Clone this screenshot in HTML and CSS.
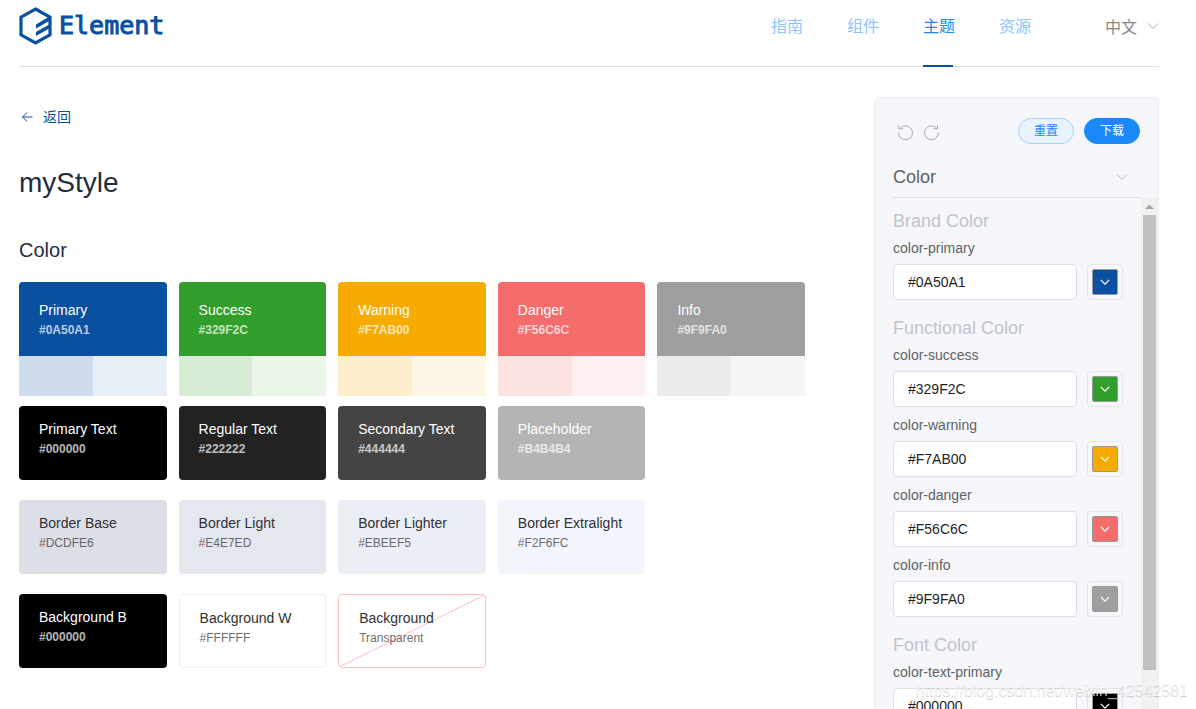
FILE: index.html
```html
<!DOCTYPE html>
<html lang="zh-CN">
<head>
<meta charset="utf-8">
<title>Element</title>
<link rel="stylesheet" href="styles.css">
</head>
<body>
<svg class="defs" aria-hidden="true">
  <symbol id="chevron" viewBox="0 0 12 12"><path d="M1 3.5 L6 8.5 L11 3.5"/></symbol>
</svg>
<div class="page">
  <header class="header">
    <a class="logo" href="#">
      <svg class="logo-mark" viewBox="0 0 34 40" aria-hidden="true">
        <path d="M16.5 3L31 11.2V28.8L16.5 37L2 28.8V11.2Z" fill="none" stroke="#0a50a1" stroke-width="3.2"/>
        <path d="M17 18.5L31 10V14.5L17 22.5ZM17 26L32 17.5V21.5L17 30Z" fill="#0a50a1"/>
      </svg>
      <span class="logo-text">Element</span>
    </a>
    <nav class="nav">
      <a class="nav-link" href="#">指南</a>
      <a class="nav-link" href="#">组件</a>
      <a class="nav-link active" href="#">主题</a>
      <a class="nav-link" href="#">资源</a>
    </nav>
    <button class="lang" type="button">中文<svg class="icon"><use href="#chevron"/></svg></button>
  </header>

  <div class="body">
    <main class="main">
      <a class="back" href="#"><svg viewBox="0 0 12 12" aria-hidden="true"><path d="M11.5 6H1.5M6 1.5L1.5 6L6 10.5"/></svg>返回</a>
      <h1 class="title">myStyle</h1>
      <h2 class="subtitle">Color</h2>

      <div class="grid brand">
        <div class="card tall primary"><div class="card-body"><span>Primary</span><small>#0A50A1</small></div><div class="tints"><i></i><i></i></div></div>
        <div class="card tall success"><div class="card-body"><span>Success</span><small>#329F2C</small></div><div class="tints"><i></i><i></i></div></div>
        <div class="card tall warning"><div class="card-body"><span>Warning</span><small>#F7AB00</small></div><div class="tints"><i></i><i></i></div></div>
        <div class="card tall danger"><div class="card-body"><span>Danger</span><small>#F56C6C</small></div><div class="tints"><i></i><i></i></div></div>
        <div class="card tall info"><div class="card-body"><span>Info</span><small>#9F9FA0</small></div><div class="tints"><i></i><i></i></div></div>
      </div>
      <div class="grid">
        <div class="card text-primary"><div class="card-body"><span>Primary Text</span><small>#000000</small></div></div>
        <div class="card text-regular"><div class="card-body"><span>Regular Text</span><small>#222222</small></div></div>
        <div class="card text-secondary"><div class="card-body"><span>Secondary Text</span><small>#444444</small></div></div>
        <div class="card text-placeholder"><div class="card-body"><span>Placeholder</span><small>#B4B4B4</small></div></div>
      </div>
      <div class="grid">
        <div class="card light border-base"><div class="card-body"><span>Border Base</span><small>#DCDFE6</small></div></div>
        <div class="card light border-light"><div class="card-body"><span>Border Light</span><small>#E4E7ED</small></div></div>
        <div class="card light border-lighter"><div class="card-body"><span>Border Lighter</span><small>#EBEEF5</small></div></div>
        <div class="card light border-extralight"><div class="card-body"><span>Border Extralight</span><small>#F2F6FC</small></div></div>
      </div>
      <div class="grid">
        <div class="card text-primary"><div class="card-body"><span>Background B</span><small>#000000</small></div></div>
        <div class="card light bg-white"><div class="card-body"><span>Background W</span><small>#FFFFFF</small></div></div>
        <div class="card light bg-transparent"><svg class="diagonal" viewBox="0 0 100 100" preserveAspectRatio="none" aria-hidden="true"><path d="M0 100L100 0"/></svg><div class="card-body"><span>Background</span><small>Transparent</small></div></div>
      </div>
    </main>

    <aside class="panel">
      <div class="toolbar">
        <button class="tool" type="button" aria-label="Undo"><svg viewBox="0 0 16 16"><path d="M1.5 8.5A7 7 0 1 0 3.2 4.2M1.8 1.5V4.7H6"/></svg></button>
        <button class="tool" type="button" aria-label="Redo"><svg viewBox="0 0 16 16"><path d="M15.5 8.5A7 7 0 1 1 13.8 4.2M14.5 1.5V4.7H10.5"/></svg></button>
        <button class="btn reset" type="button">重置</button>
        <button class="btn download" type="button">下载</button>
      </div>
      <div class="category">
        <select aria-label="Category"><option>Color</option></select>
        <svg class="icon"><use href="#chevron"/></svg>
      </div>
      <div class="scroll">
        <form class="fields">
          <section class="group">
            <h3>Brand Color</h3>
            <div class="field"><label for="c1">color-primary</label><div class="row"><input id="c1" type="text" value="#0A50A1"><button class="picker" type="button" aria-label="Pick color-primary"><span class="chip primary"><svg class="icon"><use href="#chevron"/></svg></span></button></div></div>
          </section>
          <section class="group">
            <h3>Functional Color</h3>
            <div class="field"><label for="c2">color-success</label><div class="row"><input id="c2" type="text" value="#329F2C"><button class="picker" type="button" aria-label="Pick color-success"><span class="chip success"><svg class="icon"><use href="#chevron"/></svg></span></button></div></div>
            <div class="field"><label for="c3">color-warning</label><div class="row"><input id="c3" type="text" value="#F7AB00"><button class="picker" type="button" aria-label="Pick color-warning"><span class="chip warning"><svg class="icon"><use href="#chevron"/></svg></span></button></div></div>
            <div class="field"><label for="c4">color-danger</label><div class="row"><input id="c4" type="text" value="#F56C6C"><button class="picker" type="button" aria-label="Pick color-danger"><span class="chip danger"><svg class="icon"><use href="#chevron"/></svg></span></button></div></div>
            <div class="field"><label for="c5">color-info</label><div class="row"><input id="c5" type="text" value="#9F9FA0"><button class="picker" type="button" aria-label="Pick color-info"><span class="chip info"><svg class="icon"><use href="#chevron"/></svg></span></button></div></div>
          </section>
          <section class="group">
            <h3>Font Color</h3>
            <div class="field"><label for="c6">color-text-primary</label><div class="row"><input id="c6" type="text" value="#000000"><button class="picker" type="button" aria-label="Pick color-text-primary"><span class="chip text-primary"><svg class="icon"><use href="#chevron"/></svg></span></button></div></div>
          </section>
        </form>
        <div class="scrollbar" aria-hidden="true"><svg viewBox="0 0 17 17"><path d="M4 11H13L8.5 6.5Z"/></svg><div class="thumb"></div></div>
      </div>
    </aside>
  </div>
</div>
<div class="watermark">https://blog.csdn.net/weixin_42542581</div>
</body>
</html>
```

FILE: styles.css
```css
* { box-sizing: border-box; }
body {
  margin: 0;
  font-family: "Liberation Sans", "Noto Sans CJK SC", sans-serif;
  font-size: 14px;
  color: #1f2d3d;
  background: #fff;
}
h1, h2, h3 { margin: 0; font-weight: 400; }
a { text-decoration: none; }
button, input, select { font: inherit; }
button { padding: 0; border: 0; background: none; cursor: pointer; }
.defs { position: absolute; width: 0; height: 0; }
.icon { width: 12px; height: 12px; fill: none; stroke: currentColor; }

.page {
  display: flex;
  flex-direction: column;
  height: 100vh;
  padding: 0 37px 0 19px;
  overflow: hidden;
}
.header {
  display: flex;
  flex: none;
  align-items: stretch;
  height: 67px;
  border-bottom: 1px solid #dcdfe6;
}
.logo { display: flex; gap: 6px; align-items: flex-start; padding-top: 6px; color: #0a50a1; margin-right: auto; }
.logo-mark { width: 34px; height: 40px; }
.logo-text { font: 400 25px/40px "DejaVu Sans Mono", monospace; -webkit-text-stroke: 1px currentColor; }
.nav { display: flex; gap: 44px; }
.nav-link { position: relative; font-size: 16px; line-height: 54px; color: #8cc5ff; }
.nav-link.active { color: #1989fa; }
.nav-link.active::after {
  content: "";
  position: absolute;
  right: 2px;
  bottom: -1px;
  width: 30px;
  height: 2px;
  background: #0a50a1;
}
.lang { display: flex; align-items: center; gap: 10px; height: 52px; margin-left: 74px; font-size: 16px; color: #888; }
.lang .icon { color: #aaa; }

.body { display: flex; flex: 1; gap: 69px; min-height: 0; padding-top: 30px; }
.main { flex: 1; min-width: 0; padding-top: 8px; }
.back { display: flex; align-items: center; gap: 10px; padding-left: 2px; line-height: 24px; color: #0a50a1; }
.back svg { width: 12px; height: 12px; fill: none; stroke: currentColor; }
.title { margin-top: 36px; font-size: 28px; line-height: 36px; }
.subtitle { margin-top: 35px; font-size: 20px; line-height: 28px; }

.grid { display: grid; grid-template-columns: repeat(5, 1fr); gap: 12px; margin-bottom: 20px; }
.grid.brand { margin-top: 18px; margin-bottom: 10px; }
.card { position: relative; height: 74px; border-radius: 4px; overflow: hidden; color: #fff; }
.card-body { position: relative; display: flex; flex-direction: column; height: 74px; padding: 13px 20px; }
.tall { height: 114px; }
.tall .card-body { padding-top: 18px; }
.card span { font-size: 14px; line-height: 20px; }
.card small { font-size: 12px; font-weight: 700; line-height: 20px; opacity: .7; }
.card.light small { font-weight: 400; }
.tints { display: flex; height: 40px; background: #fff; }
.tints i { flex: 1; background: var(--tint); }
.tints i + i { background: var(--tint-soft); }
.primary { background: #0a50a1; --tint: #cedcec; --tint-soft: #e7eef6; }
.success { background: #329f2c; --tint: #d6ecd5; --tint-soft: #ebf5ea; }
.warning { background: #f7ab00; --tint: #fdeecc; --tint-soft: #fef7e6; }
.danger { background: #f56c6c; --tint: #fde2e2; --tint-soft: #fef0f0; }
.info { background: #9f9fa0; --tint: #ececec; --tint-soft: #f5f5f5; }
.text-primary { background: #000; }
.text-regular { background: #222; }
.text-secondary { background: #444; }
.text-placeholder { background: #b4b4b4; }
.light { color: #303133; }
.border-base { background: #dcdfe6; }
.border-light { background: #e4e7ed; }
.border-lighter { background: #ebeef5; }
.border-extralight { background: #f2f6fc; }
.bg-white { border: 1px solid #eee; }
.bg-transparent { border: 1px solid #fcc0c0; }
.diagonal { position: absolute; inset: 0; width: 100%; height: 100%; fill: none; stroke: #fcc0c0; }
.diagonal path { vector-effect: non-scaling-stroke; }

.panel {
  display: flex;
  flex-direction: column;
  width: 25%;
  padding: 20px 0 0 18px;
  border: 1px solid #ebeef5;
  border-bottom: 0;
  border-radius: 5px 5px 0 0;
  background: #f5f7fa;
}
.toolbar { display: flex; flex: none; align-items: flex-start; gap: 10px; padding: 0 18px 0 4px; }
.tool { width: 16px; height: 16px; margin-top: 6px; color: #aaa; }
.tool svg { display: block; width: 16px; height: 16px; fill: none; stroke: currentColor; overflow: visible; }
.btn { width: 56px; height: 26px; border: 1px solid #a3d0fd; border-radius: 13px; font-size: 12px; line-height: 24px; }
.reset { margin-left: auto; background: #e8f3fe; color: #1989fa; }
.download { border-color: #1989fa; background: #1989fa; color: #fff; }
.category {
  position: relative;
  display: flex;
  flex: none;
  align-items: center;
  height: 54px;
  margin-right: 18px;
  padding-top: 12px;
  padding-right: 12px;
  border-bottom: 1px solid #dcdfe6;
  color: #606266;
}
.category select { flex: 1; padding: 0; border: 0; appearance: none; background: none; font-size: 18px; color: inherit; }
.category .icon { color: #b4b8bf; }
.scroll { display: flex; flex: 1; min-height: 0; }
.fields { flex: 1; min-width: 0; padding: 11px 18px 0 0; overflow: hidden; }
.group { display: flex; flex-direction: column; gap: 6px; margin-bottom: 16px; }
.group h3 { margin-bottom: -3px; font-size: 18px; line-height: 24px; color: #c0c4cc; }
.field { display: flex; flex-direction: column; gap: 4px; }
.field label { line-height: 24px; color: #606266; }
.row { display: flex; gap: 10px; }
.row input { flex: 1; min-width: 0; height: 36px; padding: 0 14px; border: 1px solid #dcdfe6; border-radius: 4px; background: #fff; color: #1f1f1f; }
.picker { display: grid; place-items: center; width: 36px; height: 36px; border: 1px solid #e6e6e6; border-radius: 4px; }
.chip { display: grid; place-items: center; width: 26px; height: 26px; border: 1px solid #999; border-radius: 2px; color: #fff; }
.chip .icon { width: 10px; height: 10px; stroke-width: 1.5; }
.scrollbar { width: 17px; padding: 0 2px; background: #f1f1f1; }
.scrollbar svg { display: block; width: 17px; height: 17px; margin-left: -2px; fill: #a3a3a3; }
.thumb { height: 89%; background: #c1c1c1; }

.watermark { position: fixed; right: 8px; bottom: 8px; font-size: 16px; line-height: 20px; color: rgba(255, 255, 255, .7); text-shadow: 0 1px 1px rgba(0, 0, 0, .2); }
```
